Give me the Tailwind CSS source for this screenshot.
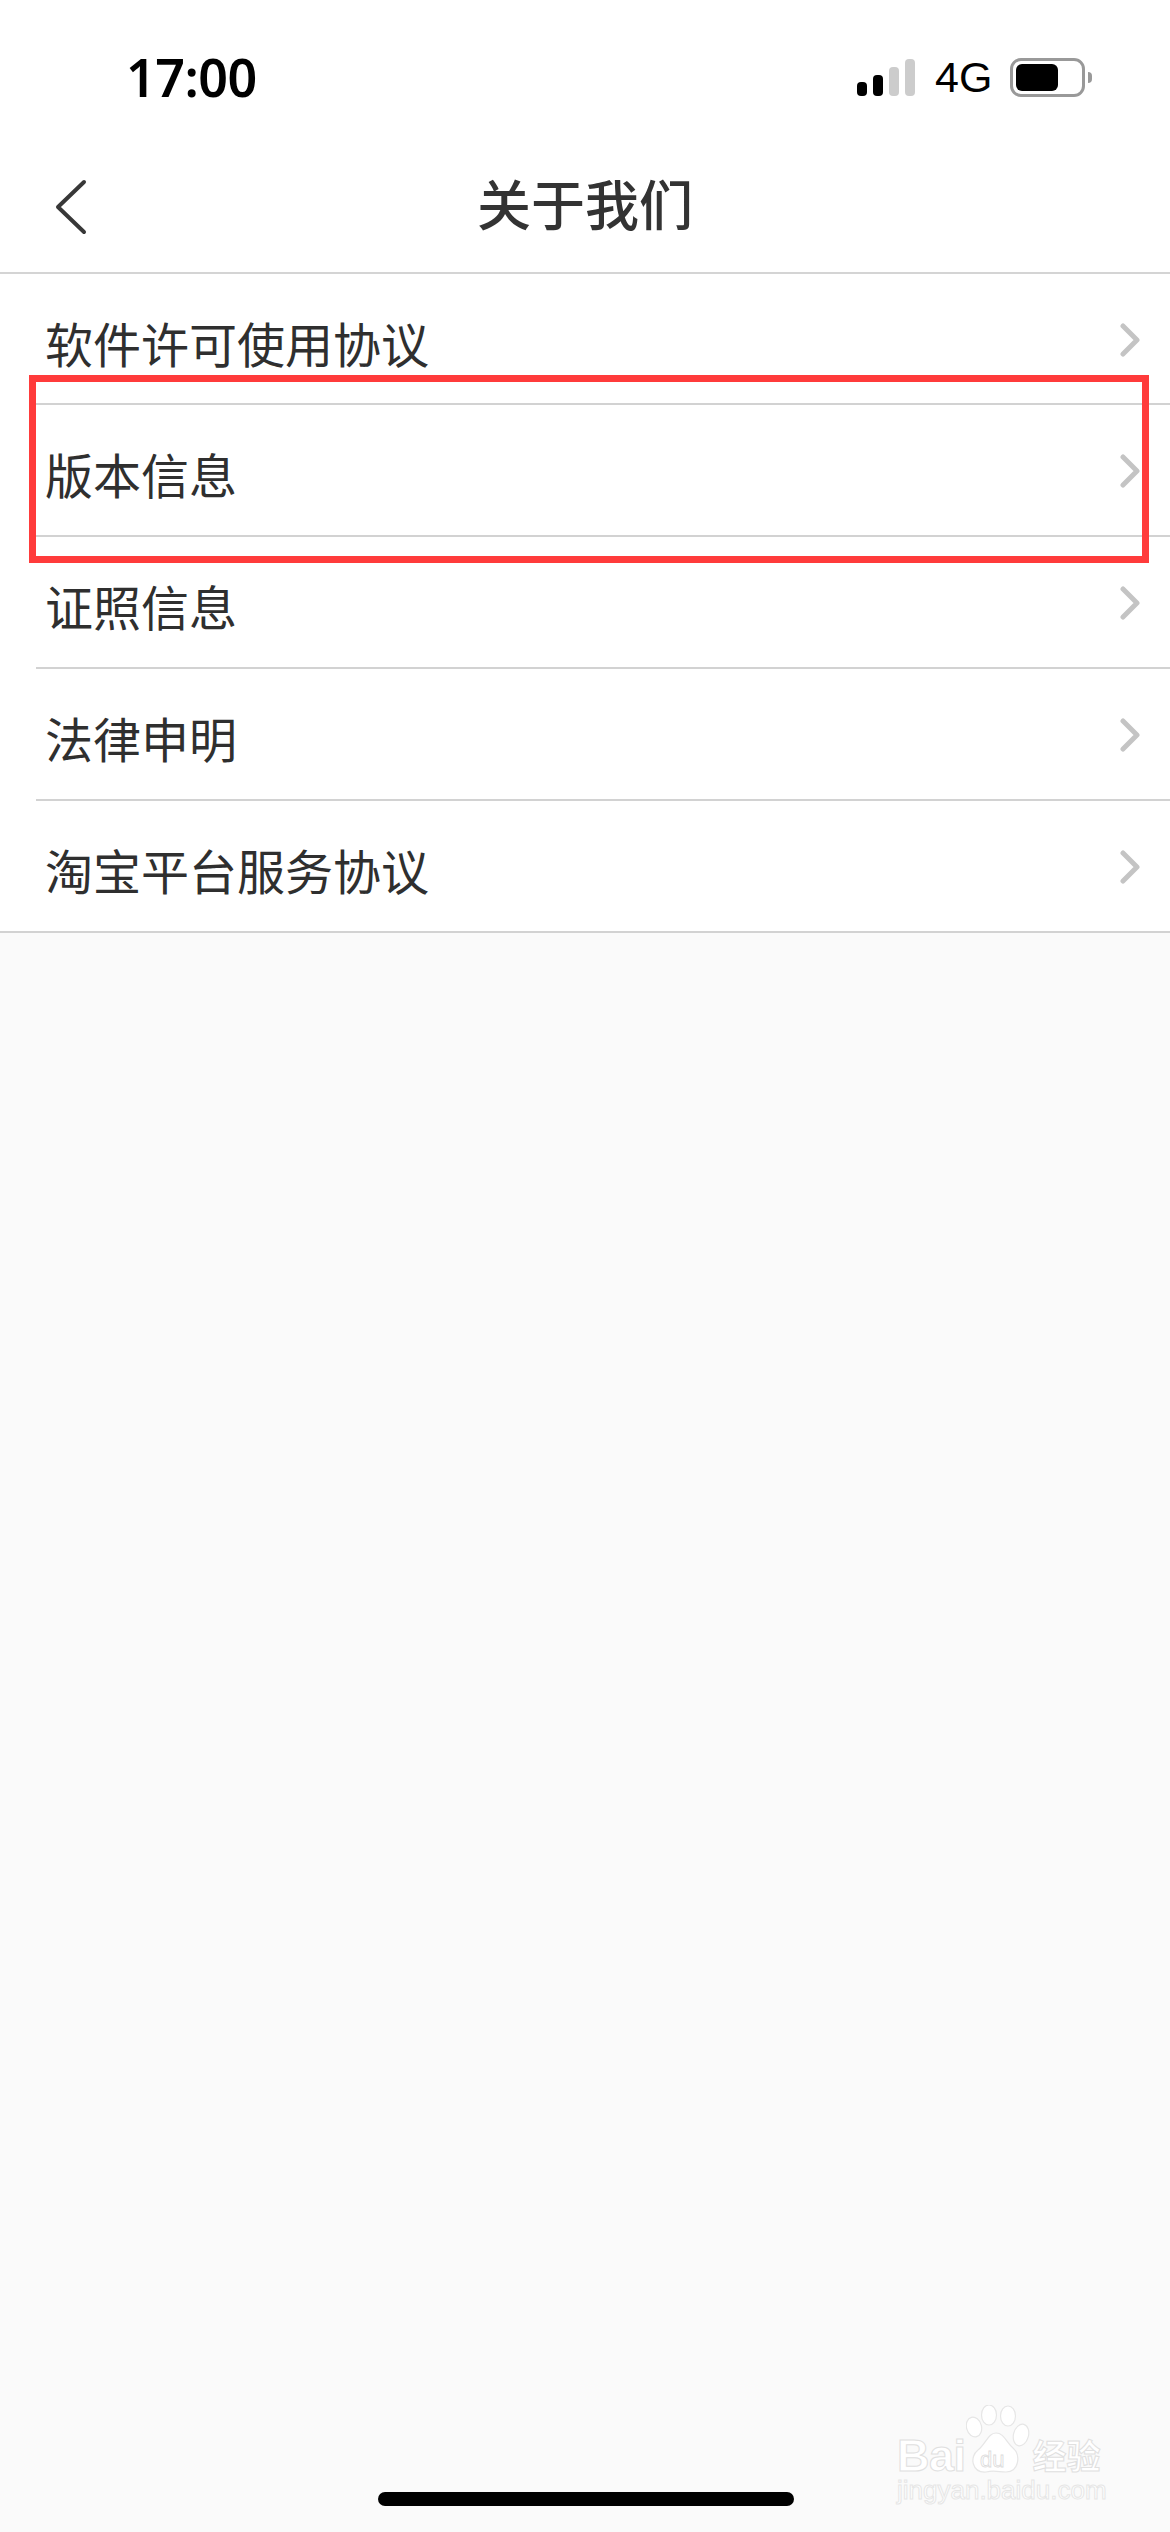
<!DOCTYPE html>
<html lang="zh">
<head>
<meta charset="utf-8">
<script src="https://cdn.jsdelivr.net/npm/@tailwindcss/browser@4"></script>
</head>
<body class="bg-[#fafafa]">
<div class="relative w-[1170px] h-[2532px] overflow-hidden bg-[#fafafa] font-['Noto_Sans_CJK_SC','Noto_Sans',sans-serif] text-[#2f2f2f]">

  <header class="bg-white h-[274px] border-b-2 border-[#d4d4d4] flex flex-col">
    <div class="h-[146px] flex items-start justify-between">
      <span class="ml-[126px] mt-[43px] text-[52px] leading-[68px] tracking-[-0.5px] font-semibold text-black font-['Noto_Sans',sans-serif]">17:00</span>
      <div class="flex items-start mr-[78px] mt-[58px]">
        <div class="flex items-end gap-[6px] h-[38px]">
          <span class="w-[10px] h-[14px] rounded-[4px] bg-black"></span>
          <span class="w-[10px] h-[21px] rounded-[4px] bg-black"></span>
          <span class="w-[10px] h-[29px] rounded-[4px] bg-[#cccccc]"></span>
          <span class="w-[10px] h-[37px] rounded-[4px] bg-[#cccccc]"></span>
        </div>
        <span class="ml-[20px] -mt-[1px] w-[55px] text-[43px] leading-[40px] text-black font-['Liberation_Sans',sans-serif]">4G</span>
        <div class="ml-[20px] w-[75px] h-[39px] rounded-[11px] border-[3px] border-[#999999] p-[3px] flex">
          <span class="w-[42px] h-full rounded-[6px] bg-black"></span>
        </div>
        <span class="ml-[3px] mt-[14px] w-[4px] h-[11px] rounded-r-full bg-[#999999]"></span>
      </div>
    </div>
    <div class="relative h-[126px] flex items-start justify-center">
      <svg class="absolute left-[50px] top-[31px]" width="40" height="58" viewBox="0 0 40 58" fill="none" stroke="#383838" stroke-width="4" stroke-linecap="round" stroke-linejoin="round"><path d="M34 5 L8 30 L34 55"/></svg>
      <h1 class="mt-[21px] text-[54px] leading-[72px] font-medium text-[#333333]">关于我们</h1>
    </div>
  </header>

  <ul class="bg-white">
    <li class="ml-[36px] h-[131px] border-b-2 border-[#d2d2d2] pl-[9px] pr-[30px] flex items-center justify-between text-[48px]">
      <span class="pt-[6px]">软件许可使用协议</span>
      <svg class="mt-[2px]" width="20" height="34" viewBox="0 0 20 34" fill="none" stroke="#c4c4c4" stroke-width="5" stroke-linecap="round" stroke-linejoin="round"><path d="M3 3 L17 17 L3 31"/></svg>
    </li>
    <li class="ml-[36px] h-[132px] border-b-2 border-[#d2d2d2] pl-[9px] pr-[30px] flex items-center justify-between text-[48px]">
      <span class="pt-[5px]">版本信息</span>
      <svg class="mt-[2px]" width="20" height="34" viewBox="0 0 20 34" fill="none" stroke="#c4c4c4" stroke-width="5" stroke-linecap="round" stroke-linejoin="round"><path d="M3 3 L17 17 L3 31"/></svg>
    </li>
    <li class="ml-[36px] h-[132px] border-b-2 border-[#d2d2d2] pl-[9px] pr-[30px] flex items-center justify-between text-[48px]">
      <span class="pt-[5px]">证照信息</span>
      <svg class="mt-[2px]" width="20" height="34" viewBox="0 0 20 34" fill="none" stroke="#c4c4c4" stroke-width="5" stroke-linecap="round" stroke-linejoin="round"><path d="M3 3 L17 17 L3 31"/></svg>
    </li>
    <li class="ml-[36px] h-[132px] border-b-2 border-[#d2d2d2] pl-[9px] pr-[30px] flex items-center justify-between text-[48px]">
      <span class="pt-[5px]">法律申明</span>
      <svg class="mt-[2px]" width="20" height="34" viewBox="0 0 20 34" fill="none" stroke="#c4c4c4" stroke-width="5" stroke-linecap="round" stroke-linejoin="round"><path d="M3 3 L17 17 L3 31"/></svg>
    </li>
    <li class="h-[132px] border-b-2 border-[#d2d2d2] pl-[45px] pr-[30px] flex items-center justify-between text-[48px]">
      <span class="pt-[5px]">淘宝平台服务协议</span>
      <svg class="mt-[2px]" width="20" height="34" viewBox="0 0 20 34" fill="none" stroke="#c4c4c4" stroke-width="5" stroke-linecap="round" stroke-linejoin="round"><path d="M3 3 L17 17 L3 31"/></svg>
    </li>
  </ul>

  <!-- red annotation box -->
  <div class="absolute left-[29px] top-[375px] w-[1120px] h-[188px] border-[7px] border-[#ff3b3b]"></div>

  <!-- home indicator -->
  <div class="absolute left-[378px] top-[2492px] w-[416px] h-[14px] rounded-full bg-black"></div>

  <!-- watermark -->
  <div class="absolute left-[897px] top-[2405px] w-[212px] flex flex-col text-white">
    <div class="flex items-end h-[70px]">
      <span class="text-[45px] leading-[38px] tracking-[-0.5px] font-bold font-['Liberation_Sans',sans-serif] [-webkit-text-stroke:1px_#e0e0e0]">Bai</span>
      <svg class="shrink-0" width="66" height="70" viewBox="0 0 66 70">
        <g fill="#ffffff" stroke="#e6e6e6" stroke-width="1.2">
          <ellipse cx="8" cy="22" rx="7.5" ry="10" transform="rotate(-15 8 22)"/>
          <ellipse cx="23" cy="10" rx="7.5" ry="10"/>
          <ellipse cx="42" cy="11" rx="7.5" ry="10"/>
          <ellipse cx="55" cy="30" rx="7.5" ry="11" transform="rotate(15 55 30)"/>
          <path d="M30 28 C38 28 40 37 47 43 C55 50 53 67 40 67 C33 67 28 65 20 67 C6 68 3 52 12 45 C20 39 22 28 30 28 Z"/>
        </g>
        <text x="14" y="62" font-family="Liberation Sans, sans-serif" font-size="22" fill="#ffffff" stroke="#dcdcdc" stroke-width="0.8">du</text>
      </svg>
      <span class="ml-[1px] text-[34px] leading-[40px] font-bold whitespace-nowrap [-webkit-text-stroke:1px_#e0e0e0]">经验</span>
    </div>
    <span class="text-[26px] leading-[30px] whitespace-nowrap font-['Liberation_Sans',sans-serif] [-webkit-text-stroke:1px_#e6e6e6]">jingyan.baidu.com</span>
  </div>
</div>
</body>
</html>
